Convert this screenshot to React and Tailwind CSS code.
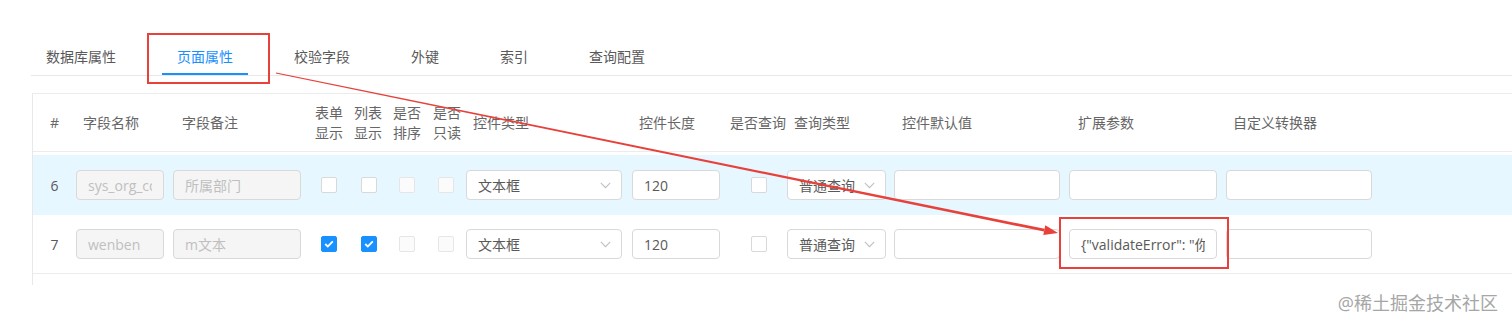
import React from "react";

const FONT = { fontFamily: '"Open Sans","Noto Sans CJK SC",sans-serif' };

function Chevron() {
  return (
    <svg width="11" height="7" viewBox="0 0 11 7" fill="none" className="shrink-0">
      <path d="M0.8 0.8 L5.5 5.6 L10.2 0.8" stroke="#bfbfbf" strokeWidth="1.1" />
    </svg>
  );
}

function Input({ w, value, disabled, children }) {
  return (
    <div
      className={`h-[30px] rounded-[4px] border border-[#d9d9d9] px-[11px] flex items-center text-[14px] overflow-hidden whitespace-nowrap ${
        disabled ? "bg-[#f5f5f5] text-[#bfbfbf]" : "bg-white text-[#595959]"
      } ${w}`}
    >
      <div className="overflow-hidden whitespace-nowrap w-full">{value}{children}</div>
    </div>
  );
}

function Select({ w, value }) {
  return (
    <div className={`h-[30px] rounded-[4px] border border-[#d9d9d9] bg-white pl-[11px] pr-[10px] flex items-center justify-between text-[14px] text-[#595959] ${w}`}>
      <span>{value}</span>
      <Chevron />
    </div>
  );
}

function Check({ checked, disabled }) {
  if (checked) {
    return (
      <div className="w-[16px] h-[16px] rounded-[2px] bg-[#1890ff] border border-[#1890ff] flex items-center justify-center">
        <svg width="10" height="8" viewBox="0 0 10 8" fill="none">
          <path d="M1.2 4 L3.8 6.4 L8.8 1.3" stroke="white" strokeWidth="1.8" />
        </svg>
      </div>
    );
  }
  return (
    <div
      className={`w-[16px] h-[16px] rounded-[2px] border ${
        disabled ? "border-[#e6e6e6] bg-[#fbfbfb]" : "border-[#d9d9d9] bg-white"
      }`}
    />
  );
}

function Row({ n, bg, name, remark, c1, c2, tall, ext }) {
  return (
    <div className={`flex items-center ${bg} ${tall}`}>
      <div className="w-[43px] text-center text-[14px] text-[#595959]">{n}</div>
      <div className="w-[97px]"><Input w="w-[88px]" value={name} disabled /></div>
      <div className="w-[139px]"><Input w="w-[128px]" value={remark} disabled /></div>
      <div className="w-[39px] pl-[9px]"><Check checked={c1} /></div>
      <div className="w-[39px] pl-[10px]"><Check checked={c2} /></div>
      <div className="w-[39px] pl-[9px]"><Check disabled /></div>
      <div className="w-[37px] pl-[9px]"><Check disabled /></div>
      <div className="w-[166px]"><Select w="w-[156px]" value="文本框" /></div>
      <div className="w-[98px]"><Input w="w-[88px]" value="120" /></div>
      <div className="w-[57px] pl-[21px]"><Check /></div>
      <div className="w-[107px]"><Select w="w-[99px]" value="普通查询" /></div>
      <div className="w-[175px]"><Input w="w-[166px]" value="" /></div>
      <div className="w-[157px]"><Input w="w-[148px]" value={ext} /></div>
      <div className="flex-1"><Input w="w-[146px]" value="" /></div>
    </div>
  );
}

export default function App() {
  const tabs = ["数据库属性", "页面属性", "校验字段", "外键", "索引", "查询配置"];
  return (
    <div className="relative w-[1512px] h-[327px] bg-white overflow-hidden" style={FONT}>
      <div className="pt-[38px] pl-[31px]">
        {/* Tabs */}
        <div className="flex gap-[31px] border-b border-[#e8e8e8]">
          {tabs.map((t, i) => (
            <div
              key={t}
              className={`relative px-[15px] pt-[8px] pb-[7px] text-[14px] leading-[22px] ${
                i === 1 ? "text-[#1890ff]" : "text-[#595959]"
              }`}
            >
              {t}
              {i === 1 && <div className="absolute left-0 right-0 bottom-0 h-[2px] bg-[#1890ff]" />}
            </div>
          ))}
        </div>

        {/* Table */}
        <div className="mt-[17px] ml-[1px] border-l border-[#e8e8e8] pb-[11px]">
          <div className="flex items-center h-[59px] border-t border-b border-[#ececec] text-[14px] text-[#666] leading-[20px]">
            <div className="w-[43px] text-center">#</div>
            <div className="w-[97px] pl-[7px]">字段名称</div>
            <div className="w-[139px] pl-[9px]">字段备注</div>
            <div className="w-[39px] pl-[3px]">表单<br />显示</div>
            <div className="w-[39px] pl-[3px]">列表<br />显示</div>
            <div className="w-[39px] pl-[3px]">是否<br />排序</div>
            <div className="w-[37px] pl-[4px]">是否<br />只读</div>
            <div className="w-[166px] pl-[7px]">控件类型</div>
            <div className="w-[98px] pl-[7px]">控件长度</div>
            <div className="w-[57px]">是否查询</div>
            <div className="w-[107px] pl-[7px]">查询类型</div>
            <div className="w-[175px] pl-[8px]">控件默认值</div>
            <div className="w-[157px] pl-[9px]">扩展参数</div>
            <div className="flex-1 pl-[7px]">自定义转换器</div>
          </div>
          <div className="h-[3px]" />
          <Row n="6" bg="bg-[#e6f7ff]" tall="h-[60px]" name="sys_org_code" remark="所属部门" ext="" />
          <Row
            n="7"
            bg="bg-white border-b border-[#ececec]"
            tall="h-[59px]"
            name="wenben"
            remark="m文本"
            c1
            c2
            ext={'{"validateError": "你好，请输入正确的内容"}'}
          />
        </div>
      </div>

      {/* Annotations */}
      <div className="absolute left-[147px] top-[33px] w-[123px] h-[51px] border-[2.5px] border-[#e8403a]" />
      <div className="absolute left-[1059px] top-[217px] w-[170px] h-[52px] border-[2.5px] border-[#e8403a]" />
      <svg className="absolute left-0 top-0 pointer-events-none" width="1512" height="327">
        <polygon points="276.12,72.41 1044.58,228.83 1044.02,231.57 275.88,73.59" fill="#e8403a" />
        <polygon points="1058,233 1043.3,235.1 1045.3,225.3" fill="#e8403a" />
      </svg>

      <div className="absolute right-[14px] top-[290px] text-[18px] leading-[26px] text-[#a6a6a6]">
        @稀土掘金技术社区
      </div>
    </div>
  );
}
